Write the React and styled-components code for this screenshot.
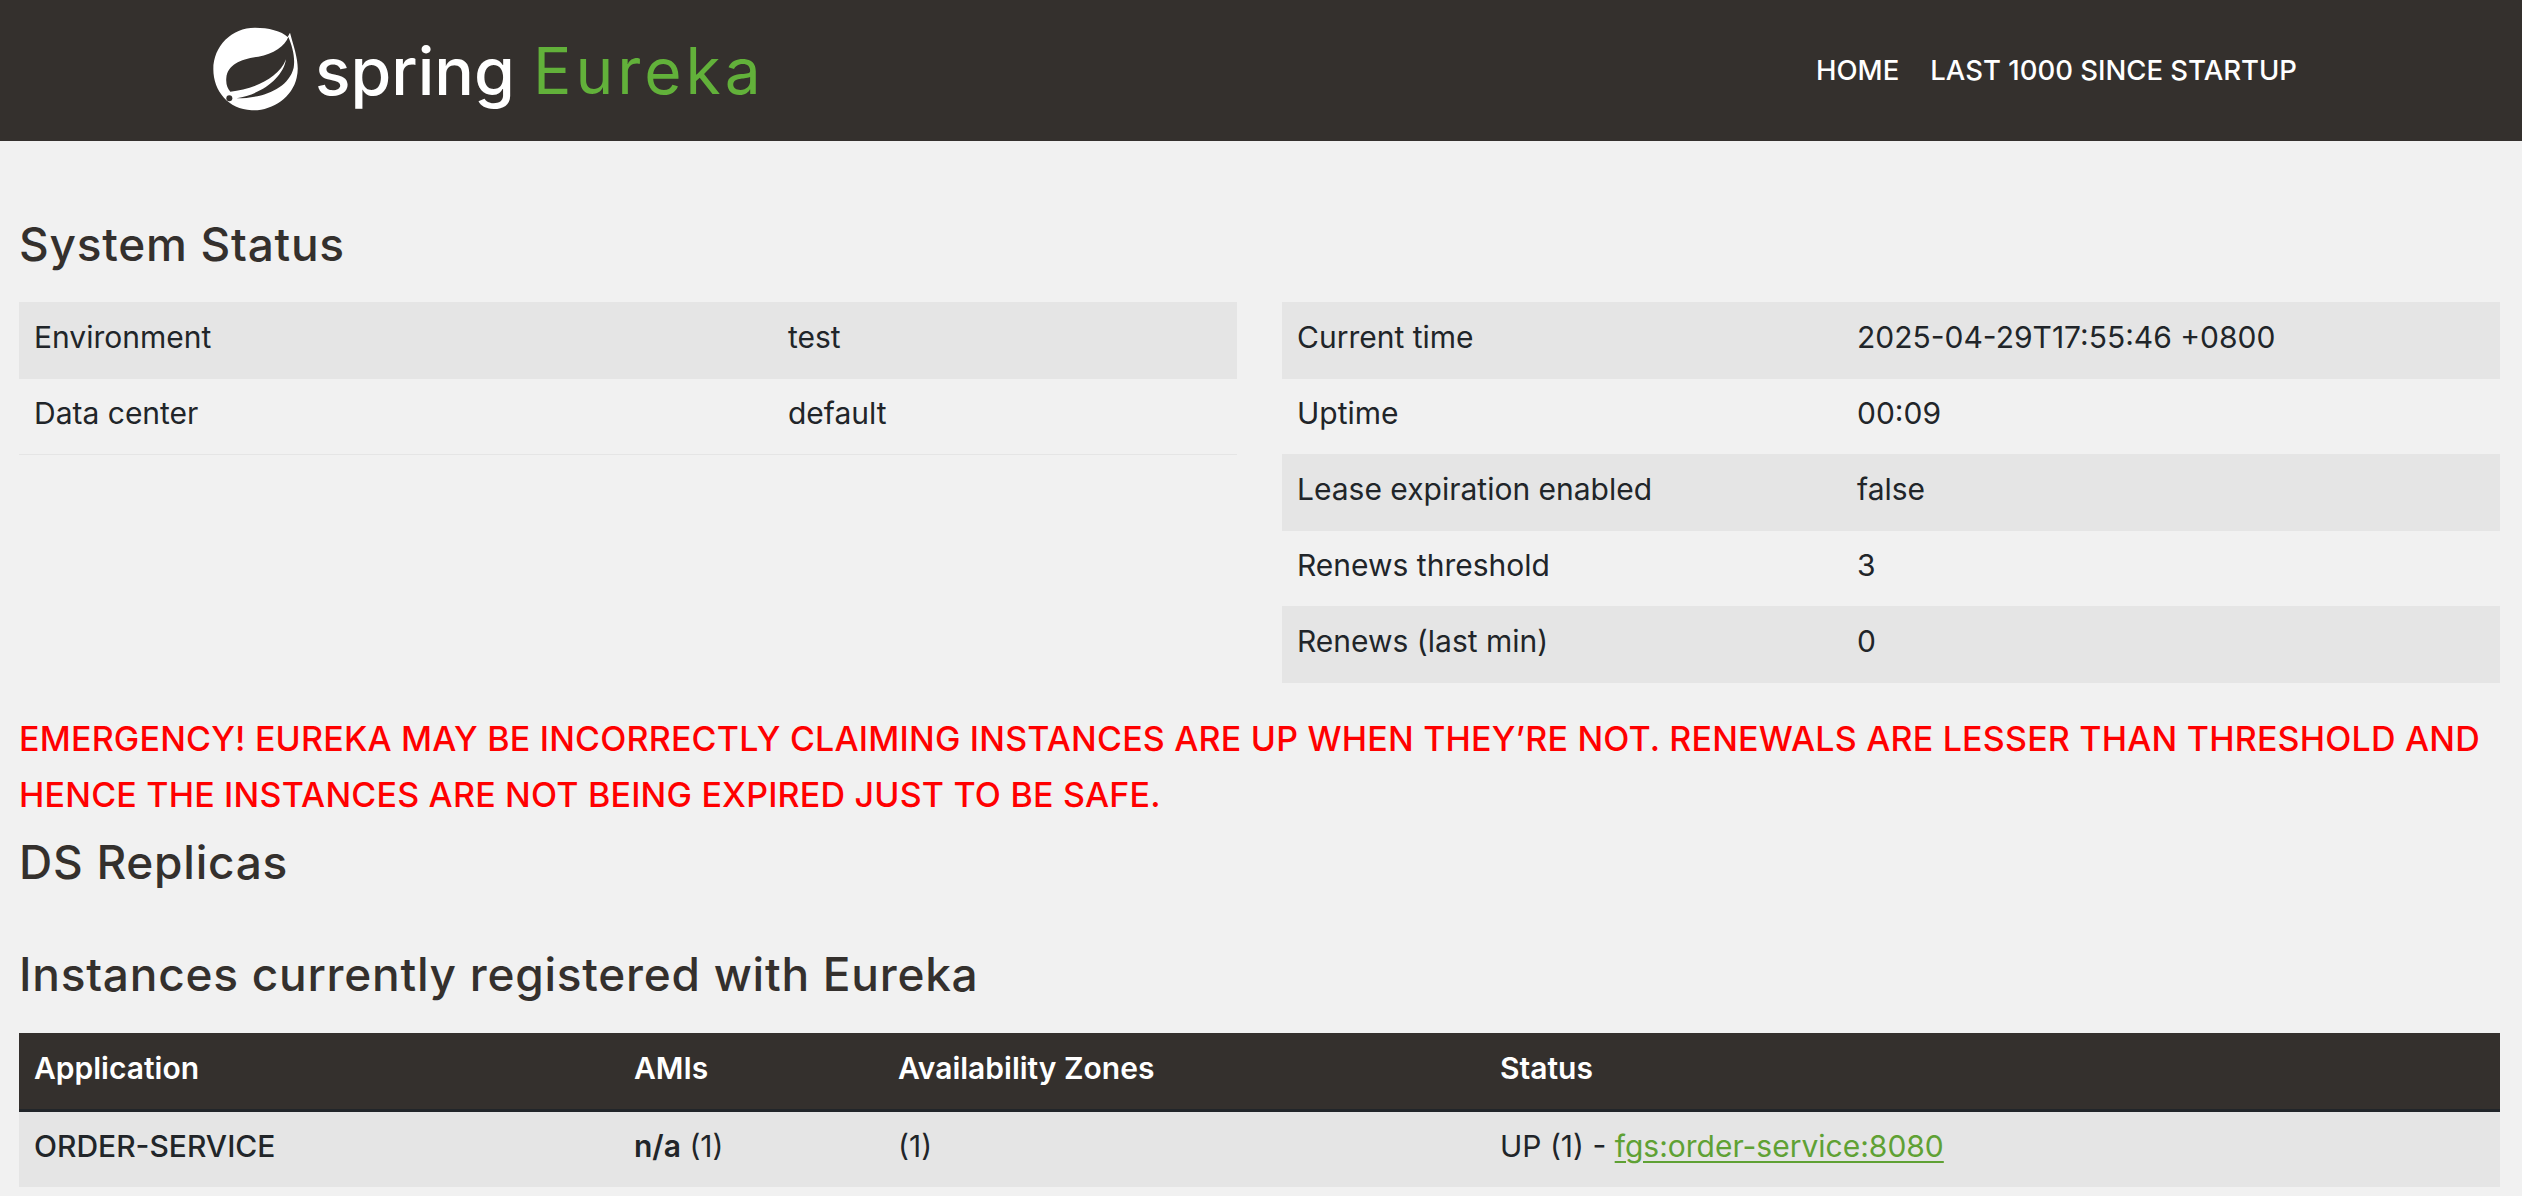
import React from 'react'
import styled, { createGlobalStyle } from 'styled-components'

const bodyFont = `Inter, "Noto Sans", sans-serif`

const GlobalStyle = createGlobalStyle`
  html, body { margin: 0; padding: 0; background: #f1f1f1; }
  body { font-family: ${bodyFont}; color: #212529; }
`

const Page = styled.div`
  width: 2522px;
  height: 1196px;
  overflow: hidden;
`

const TopBar = styled.header`
  height: 141px;
  background: #34302d;
  display: flex;
  align-items: center;
  padding-left: 205px;
`

const Brand = styled.div`
  display: flex;
  align-items: center;
  width: 1611px;
`

const BrandWord = styled.span`
  font-size: ${p => p.$green ? '64px' : '66px'};
  font-weight: ${p => p.$green ? 400 : 500};
  line-height: 1;
  color: ${p => p.$green ? '#62b13a' : '#ffffff'};
  margin-left: ${p => p.$green ? '18px' : '10px'};
  letter-spacing: ${p => p.$green ? '4px' : '0'};
`

const Nav = styled.nav`
  display: flex;
  gap: 31px;
  padding-bottom: 2px;
`

const NavLink = styled.a`
  color: #fff;
  font-size: 27.5px;
  font-weight: 500;
  text-transform: uppercase;
`

const Main = styled.main`
  padding: 78px 22px 0 19px;
`

const Heading = styled.h1`
  margin: ${p => p.$margin || '0'};
  font-weight: 500;
  font-size: 46px;
  line-height: 50px;
  letter-spacing: 0.75px;
  color: #34302d;
`

const TwoCols = styled.div`
  display: grid;
  grid-template-columns: 1218px 1218px;
  gap: 45px;
  align-items: start;
  margin-top: 33px;
`

const Table = styled.table`
  width: 100%;
  border-collapse: collapse;
  table-layout: fixed;
  font-size: 30px;
`

const Row = styled.tr`
  background: ${p => p.$striped ? '#e5e5e5' : 'transparent'};
`

const Cell = styled.td`
  height: 76px;
  box-sizing: border-box;
  padding: 0 15px 6px;
  border-bottom: 1px solid #e5e5e5;
  width: ${p => p.$width || 'auto'};
  font-weight: ${p => p.$bold ? 500 : 400};
`

const HeadCell = styled.th`
  height: 78px;
  box-sizing: border-box;
  padding: 0 15px 6px;
  background: #34302d;
  color: #fff;
  text-align: left;
  font-weight: 600;
  border-bottom: 3px solid #212529;
  width: ${p => p.$width || 'auto'};
`

const Strong = styled.b`
  font-weight: 600;
`

const Emergency = styled.h4`
  margin: 28px 0 0;
  font-weight: 500;
  font-size: 34px;
  line-height: 56px;
  letter-spacing: 0.2px;
  color: #ff0000;
  text-transform: uppercase;
`

const ServiceLink = styled.a`
  color: #5fa134;
  text-decoration: underline;
  text-decoration-thickness: 2px;
  text-underline-offset: 4px;
`

function SpringLeaf() {
  return (
    <svg width="100" height="100" viewBox="0 0 300 300">
      <path
        fill="#fff"
        d="M255 35C270 90 285 130 275 170C262 230 200 270 140 268C70 265 25 210 25 145C25 75 80 20 150 20C190 20 230 30 248 48Z"
      />
      <path
        fill="#34302d"
        d="M250 48C240 75 205 100 160 107C110 113 68 130 64 170C62 190 68 203 76 212C140 205 220 175 243 115C235 170 170 220 95 232C170 232 250 205 266 140C271 110 262 75 250 48Z"
      />
      <circle cx="73" cy="232" r="9" fill="#34302d" />
    </svg>
  )
}

export default function App() {
  return (
    <Page>
      <GlobalStyle />
      <TopBar>
        <Brand>
          <SpringLeaf />
          <BrandWord>spring</BrandWord>
          <BrandWord $green>Eureka</BrandWord>
        </Brand>
        <Nav>
          <NavLink>Home</NavLink>
          <NavLink>Last 1000 since startup</NavLink>
        </Nav>
      </TopBar>
      <Main>
        <Heading>System Status</Heading>
        <TwoCols>
          <Table>
            <tbody>
              <Row $striped>
                <Cell $width="754px">Environment</Cell>
                <Cell>test</Cell>
              </Row>
              <Row>
                <Cell>Data center</Cell>
                <Cell>default</Cell>
              </Row>
            </tbody>
          </Table>
          <Table>
            <tbody>
              <Row $striped>
                <Cell $width="560px">Current time</Cell>
                <Cell>2025-04-29T17:55:46 +0800</Cell>
              </Row>
              <Row>
                <Cell>Uptime</Cell>
                <Cell>00:09</Cell>
              </Row>
              <Row $striped>
                <Cell>Lease expiration enabled</Cell>
                <Cell>false</Cell>
              </Row>
              <Row>
                <Cell>Renews threshold</Cell>
                <Cell>3</Cell>
              </Row>
              <Row $striped>
                <Cell>Renews (last min)</Cell>
                <Cell>0</Cell>
              </Row>
            </tbody>
          </Table>
        </TwoCols>
        <Emergency>
          Emergency! Eureka may be incorrectly claiming instances are up when they’re not. Renewals are lesser than threshold and hence the instances are not being expired just to be safe.
        </Emergency>
        <Heading $margin="14px 0 0">DS Replicas</Heading>
        <Heading $margin="62px 0 34px">Instances currently registered with Eureka</Heading>
        <Table>
          <thead>
            <tr>
              <HeadCell $width="600px">Application</HeadCell>
              <HeadCell $width="264px">AMIs</HeadCell>
              <HeadCell $width="602px">Availability Zones</HeadCell>
              <HeadCell>Status</HeadCell>
            </tr>
          </thead>
          <tbody>
            <Row $striped>
              <Cell $bold>ORDER-SERVICE</Cell>
              <Cell><Strong>n/a</Strong> (1)</Cell>
              <Cell>(1)</Cell>
              <Cell>UP (1) - <ServiceLink>fgs:order-service:8080</ServiceLink></Cell>
            </Row>
          </tbody>
        </Table>
      </Main>
    </Page>
  )
}
